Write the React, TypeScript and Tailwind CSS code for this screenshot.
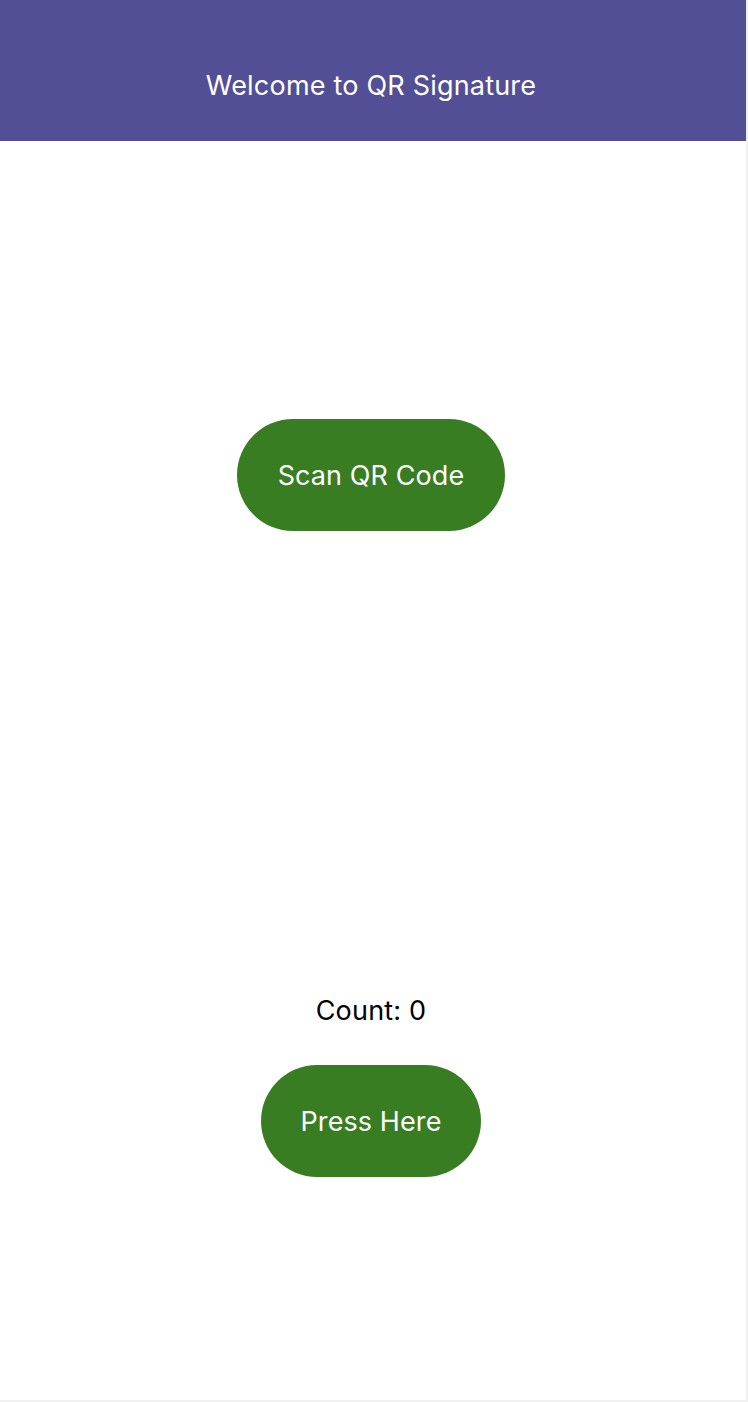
export default function App() {
  return (
    <div className="h-[1402px] w-[748px] bg-[#f0f0f0] font-['Inter',sans-serif]">
      <div className="flex h-[1400px] w-[746px] flex-col items-center bg-white pr-[4px]">
        <header className="-mr-[4px] flex h-[141px] w-[746px] items-center justify-center bg-[#524f96] pr-[4px] pt-[30px]">
          <h1 className="text-[27px] leading-none tracking-[0.2px] text-white">Welcome to QR Signature</h1>
        </header>

        <button className="mt-[278px] h-[112px] rounded-full bg-[#387d22] px-[41px] pt-[3px] text-[27px] tracking-[0.1px] text-white">
          Scan QR Code
        </button>

        <p className="mt-[464px] text-[27px] leading-[32px] tracking-[0.2px] text-black">Count: 0</p>

        <button className="mt-[38px] h-[112px] rounded-full bg-[#387d22] px-[39px] pt-[3px] text-[27px] tracking-[0.1px] text-white">
          Press Here
        </button>
      </div>
    </div>
  );
}
